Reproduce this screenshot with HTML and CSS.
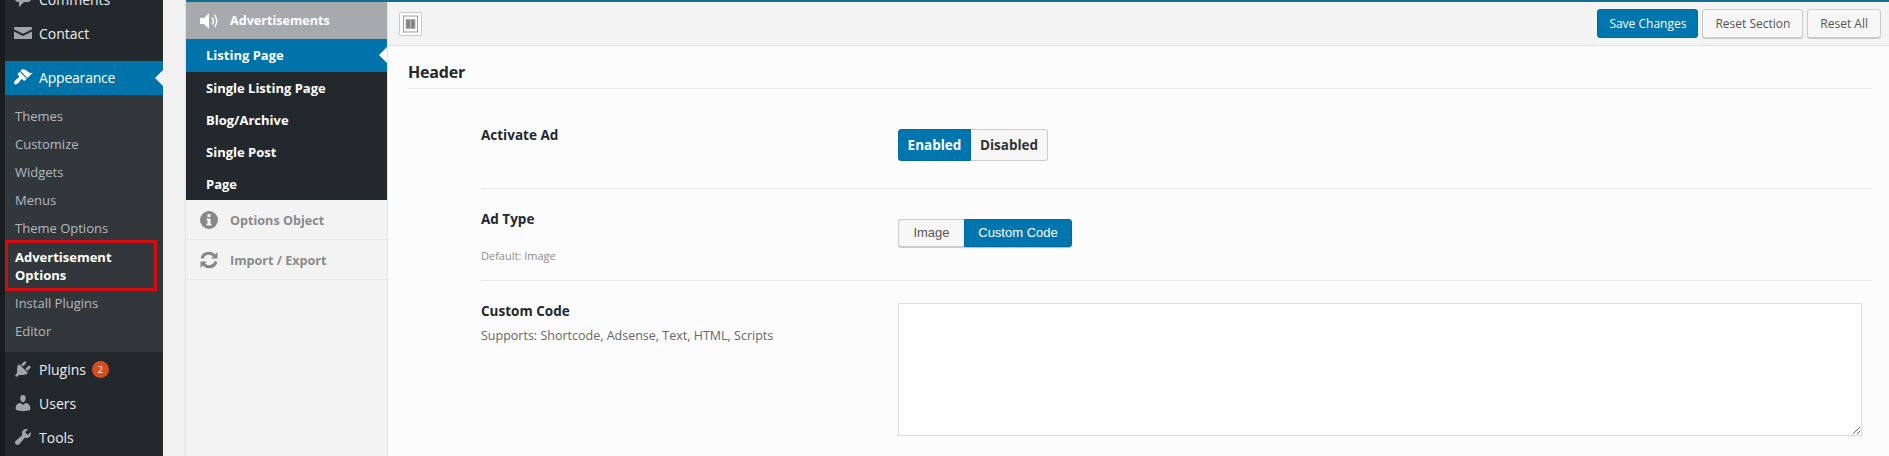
FILE: index.html
```html
<!DOCTYPE html>
<html lang="en">
<head>
<meta charset="utf-8">
<title>Advertisement Options</title>
<link rel="stylesheet" href="styles.css">
</head>
<body>
<div class="shell">
  <aside class="sidebar">
    <ul class="menu">
      <li class="menu-item"><svg class="mi" viewBox="0 0 20 20"><path d="M5 2h10a3 3 0 0 1 3 3v5a3 3 0 0 1-3 3h-4l-5 5v-5H5a3 3 0 0 1-3-3V5a3 3 0 0 1 3-3z"/></svg><span>Comments</span></li>
      <li class="menu-item"><svg class="mi" viewBox="0 0 20 20"><path d="M2 4h16a1 1 0 0 1 1 1v1.200l-9 4.600-9-4.600V5a1 1 0 0 1 1-1zM1 8.400l9 4.600 9-4.600V16H1z"/></svg><span>Contact</span></li>
      <li class="menu-item current"><svg class="mi" viewBox="0 0 20 20"><path d="M14.48 11.06L7.41 3.99l1.5-1.5c.5-.56 2.3-.47 3.51.32 1.21.8 1.43 1.28 2.91 2.1 1.18.64 2.45 1.26 4.45.85zm-.71.71L6.7 4.7 4.93 6.47c-.39.39-.39 1.02 0 1.41l1.06 1.06c.39.39.39 1.03 0 1.42-.6.6-1.43 1.11-2.21 1.69-.35.26-.7.53-1.01.84C1.43 14.23.4 16.08 1.4 17.07c.99 1 2.84-.03 4.18-1.36.31-.31.58-.66.85-1.02.57-.78 1.08-1.61 1.69-2.21.39-.39 1.02-.39 1.41 0l1.06 1.06c.39.39 1.02.39 1.41 0z"/></svg><span>Appearance</span></li>
      <li>
        <ul class="submenu">
          <li>Themes</li>
          <li>Customize</li>
          <li>Widgets</li>
          <li>Menus</li>
          <li>Theme Options</li>
          <li class="sub-active">Advertisement Options</li>
          <li>Install Plugins</li>
          <li>Editor</li>
        </ul>
      </li>
      <li class="menu-item"><svg class="mi" viewBox="0 0 20 20"><path d="M13.11 4.36L9.87 7.6 8 5.73l3.24-3.24c.35-.34 1.05-.2 1.56.32.52.51.66 1.21.31 1.55zm-8 1.77l.91-1.12 9.01 9.01-1.19.84c-.71.71-2.63 1.16-3.82 1.16H6.14L4.9 17.26c-.59.59-1.54.59-2.12 0-.59-.58-.59-1.53 0-2.12l1.24-1.24v-3.88c0-1.13.4-3.19 1.09-3.89zm7.26 3.97l3.24-3.24c.34-.35 1.04-.21 1.55.31.52.51.66 1.21.31 1.55l-3.24 3.25z"/></svg><span>Plugins</span><b class="badge">2</b></li>
      <li class="menu-item"><svg class="mi" viewBox="0 0 20 20"><path d="M10 9.25c-2.27 0-2.73-3.44-2.73-3.44C7 4.02 7.82 2 9.97 2c2.16 0 2.98 2.02 2.71 3.81 0 0-.41 3.44-2.68 3.44zm0 2.57L12.72 10c2.39 0 4.52 2.33 4.52 4.53v2.49s-3.65 1.13-7.24 1.13c-3.65 0-7.24-1.13-7.24-1.13v-2.49c0-2.25 1.94-4.48 4.47-4.48z"/></svg><span>Users</span></li>
      <li class="menu-item"><svg class="mi" viewBox="0 0 20 20"><path d="M16.68 9.77c-1.34 1.34-3.3 1.67-4.95.99l-5.41 6.52c-.99.99-2.59.99-3.58 0s-.99-2.59 0-3.57l6.52-5.42c-.68-1.65-.35-3.61.99-4.95 1.28-1.28 3.12-1.62 4.72-1.06l-2.89 2.89 2.82 2.82 2.86-2.87c.53 1.58.18 3.39-1.08 4.65z"/></svg><span>Tools</span></li>
    </ul>
  </aside>

  <div class="options">
    <nav class="panel">
      <div class="panel-head">
        <svg class="pi" viewBox="0 0 20 20"><path class="fill" d="M1 7h4l5-5v16l-5-5H1z"/><path class="arc" d="M13 6.500c1.600 2 1.600 5 0 7M15.600 4c2.800 3.400 2.800 8.600 0 12"/></svg>
        <span>Advertisements</span>
      </div>
      <ul class="panel-sub">
        <li class="on">Listing Page</li>
        <li>Single Listing Page</li>
        <li>Blog/Archive</li>
        <li>Single Post</li>
        <li>Page</li>
      </ul>
      <div class="panel-item">
        <svg class="pi" viewBox="0 0 20 20"><path fill-rule="evenodd" d="M10 1a9 9 0 1 1 0 18 9 9 0 0 1 0-18zM8.500 4v3h3V4zM7.500 8.500v1.700h1v3.600h-1v1.700h5v-1.700h-1V8.500z"/></svg>
        <span>Options Object</span>
      </div>
      <div class="panel-item">
        <svg class="pi" viewBox="0 0 20 20"><path class="arc2" d="M3 8.500C4 5 6.800 3.300 10 3.300c2.200 0 4 1 5.300 2.500M17 11.500c-1 3.500-3.800 5.200-7 5.200-2.200 0-4-1-5.300-2.500"/><path d="M18.500 2v6.500H12zM1.500 18v-6.500H8z"/></svg>
        <span>Import / Export</span>
      </div>
    </nav>

    <main class="main">
      <header class="toolbar">
        <button class="layout-btn" type="button" aria-label="Toggle layout">
          <svg viewBox="0 0 16 18"><rect class="lo" x=".5" y=".5" width="15" height="17"/><rect class="lf" x="3" y="4" width="10" height="10"/><path class="li" d="M8 4v10"/></svg>
        </button>
        <div class="actions">
          <button class="btn primary" type="button">Save Changes</button>
          <button class="btn" type="button">Reset Section</button>
          <button class="btn" type="button">Reset All</button>
        </div>
      </header>

      <section class="section">
        <h2 class="section-title">Header</h2>

        <div class="row row-activate">
          <div class="label"><h3>Activate Ad</h3></div>
          <div class="field">
            <div class="switch">
              <span class="switch-on">Enabled</span>
              <span class="switch-off">Disabled</span>
            </div>
          </div>
        </div>

        <div class="row row-type">
          <div class="label">
            <h3>Ad Type</h3>
            <p class="hint">Default: Image</p>
          </div>
          <div class="field">
            <div class="radio">
              <span class="radio-off">Image</span>
              <span class="radio-on">Custom Code</span>
            </div>
          </div>
        </div>

        <div class="row row-code">
          <div class="label">
            <h3>Custom Code</h3>
            <p class="desc">Supports: Shortcode, Adsense, Text, HTML, Scripts</p>
          </div>
          <div class="field">
            <textarea class="code" aria-label="Custom Code"></textarea>
          </div>
        </div>
      </section>
    </main>
  </div>
</div>
</body>
</html>
```
FILE: styles.css
```css
* { box-sizing: border-box; }
html, body { margin: 0; height: 456px; overflow: hidden; }
body { background: #f1f1f1; font-family: "Open Sans", "Noto Sans", sans-serif; color: #333; }
ul { list-style: none; margin: 0; padding: 0; }
h2, h3, p { margin: 0; }

.shell { display: flex; height: 456px; border-left: 5px solid #191c1f; }

/* Admin sidebar */
.sidebar { width: 158px; flex: none; background: #23282d; overflow: hidden; margin-right: 23px; }
.menu { margin-top: -18px; }
.menu-item { position: relative; display: flex; align-items: center; height: 34px; padding-left: 8px; font-size: 14px; color: #eee; }
.mi { width: 20px; height: 20px; flex: none; margin-right: 6px; fill: #a0a5aa; }
.menu-item:nth-child(2) { margin-bottom: 11px; }
.current { background: #0073aa; color: #fff; padding-bottom: 2px; letter-spacing: -.2px; }
.current .mi { fill: #fff; }
.current::after { content: ""; position: absolute; right: 0; top: 9px; border: 8px solid transparent; border-right-color: #f1f1f1; border-left-width: 0; }
.submenu { background: #32373c; padding: 7px 0; font-size: 13px; color: #b4b9be; }
.submenu li { padding: 0 10px; line-height: 28px; height: 28px; }
.submenu .sub-active { position: relative; height: 47px; line-height: 18px; padding: 6px 40px 5px 10px; color: #fff; font-weight: 700; }
.sub-active::after { content: ""; position: absolute; inset: -2px 6px -2px 0; border: 3px solid #d40d12; }
.badge { width: 17px; height: 17px; margin-left: 6px; border-radius: 50%; background: #d54e21; color: #fff; font-size: 9px; line-height: 17px; text-align: center; font-weight: 400; }

/* Options frame */
.options { flex: 1; min-width: 0; display: flex; border-top: 2px solid #0f6f8f; }

.panel { width: 202px; flex: none; background: #f3f3f3; box-shadow: -1px 0 0 #e2e2e2; border-right: 1px solid #e2e2e2; font-weight: 700; font-size: 13px; }
.panel-head { display: flex; align-items: center; height: 37px; background: #a7aaad; color: #fff; padding-left: 13px; font-size: 12.600px; }
.pi { width: 20px; height: 20px; flex: none; margin-right: 11px; fill: #888; }
.panel-head .pi { fill: #fff; }
.arc { fill: none; stroke: #fff; stroke-width: 1.500; }
.arc2 { fill: none; stroke: #888; stroke-width: 3; }
.panel-sub { background: #23282d; color: #fff; }
.panel-sub li { position: relative; height: 32px; line-height: 32px; padding-left: 20px; }
.panel-sub .on { height: 33px; line-height: 33px; background: #0073aa; }
.on::after { content: ""; position: absolute; right: 0; top: 8px; border: 8px solid transparent; border-right-color: #fff; border-left-width: 0; }
.panel-item { display: flex; align-items: center; height: 40px; padding-left: 13px; color: #8a8a8a; border-bottom: 1px solid #ececec; font-size: 12.600px; }
.panel-item span { padding-top: 1px; }

/* Main options */
.main { flex: 1; min-width: 0; background: #fcfcfc; }
.toolbar { display: flex; align-items: center; justify-content: space-between; height: 44px; padding: 0 8px 0 11px; background: #f3f3f3; border-bottom: 1px solid #dfdfdf; }
.layout-btn { width: 23px; height: 24px; padding: 2px 3px; background: #fbfbfb; border: 1px solid #ccc; border-radius: 2px; display: flex; }
.layout-btn svg { width: 100%; height: 100%; }
.lo { stroke: #999; stroke-width: 1; fill: none; }
.lf { fill: #888; }
.li { stroke: #bbb; stroke-width: 1; }
.actions { display: flex; gap: 4px; }
.btn { height: 29px; padding: 0 12px; font: 400 12px/27px "Open Sans", sans-serif; color: #555; background: #f7f7f7; border: 1px solid #ccc; border-radius: 3px; box-shadow: 0 1px 0 #ccc; }
.btn.primary { padding: 0 11px; background: #0075ae; border-color: #006ba1; color: #fff; box-shadow: none; }

.section { margin: 0 17px 0 20px; }
.section-title { font-size: 16px; font-weight: 700; line-height: 20px; padding: 16px 0 6px; color: #23282d; border-bottom: 1px solid #e7e7e7; letter-spacing: -.2px; }

.row { display: grid; grid-template-columns: 417px 1fr; margin-left: 73px; padding-right: 10px; border-bottom: 1px solid #e7e7e7; }
.row:last-child { border-bottom: 0; }
.label h3 { font-size: 13.500px; line-height: 20px; font-weight: 700; color: #23282d; }
.row-activate { padding: 36px 10px 27px 0; }
.row-activate .field { padding-top: 4px; }
.row-type { padding: 20px 10px 15px 0; }
.row-type .field { padding-top: 10px; }
.row-code { padding: 20px 10px 0 0; }
.row-code .field { padding-top: 2px; }

.hint { margin-top: 18px; font-size: 11px; line-height: 18px; color: #8c8c8c; }
.desc { margin-top: 6px; font-size: 12.500px; line-height: 18px; color: #666; }

.switch { display: inline-flex; height: 32px; font-size: 13.500px; font-weight: 700; line-height: 30px; }
.switch-on { width: 73px; text-align: center; color: #fff; background: #0075ae; border: 1px solid #006ba1; border-radius: 3px 0 0 3px; }
.switch-off { width: 77px; text-align: center; color: #333; background: #f7f7f7; border: 1px solid #ccc; border-left: 0; border-radius: 0 3px 3px 0; }

.radio { display: inline-flex; height: 28px; font: 13px/26px "Liberation Sans", Arial, sans-serif; }
.radio-off { width: 66px; text-align: center; color: #555; background: #f7f7f7; border: 1px solid #ccc; border-right: 0; border-radius: 3px 0 0 3px; box-shadow: 0 1px 0 #ccc; }
.radio-on { width: 108px; text-align: center; color: #fff; background: #0075ae; border: 1px solid #006ba1; border-radius: 0 3px 3px 0; box-shadow: 0 1px 1px #bbb; }

.code { display: block; width: 964px; height: 133px; padding: 2px 6px; background: #fff; border: 1px solid #ddd; border-radius: 0; outline: 0; }
```
